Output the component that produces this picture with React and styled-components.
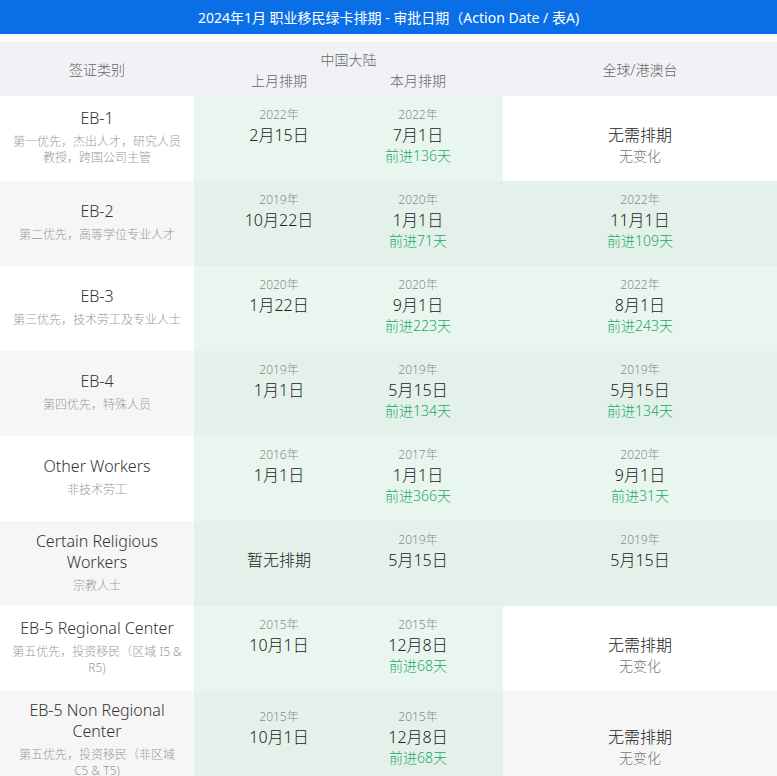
import React from "react";
import styled, { createGlobalStyle } from "styled-components";

const GlobalStyle = createGlobalStyle`
  html, body { margin: 0; padding: 0; overflow: hidden; background: #ffffff; }
  body { font-family: "Noto Sans", "Noto Sans CJK SC", sans-serif; font-weight: 300; }
  * { box-sizing: border-box; }
`;

const Page = styled.div`
  width: 777px;
  display: flex;
  flex-direction: column;
`;

const TitleBar = styled.div`
  height: 34px;
  background: #0a6fe6;
  color: #ffffff;
  font-size: 14px;
  font-weight: 400;
  display: flex;
  align-items: center;
  justify-content: center;
  padding-bottom: 1px;
`;

const Table = styled.div`
  margin-top: 8px;
  display: flex;
  flex-direction: column;
`;

const HeaderRow = styled.div`
  display: grid;
  grid-template-columns: 194px 309px 1fr;
  height: 54px;
  background: #f1f2f5;
  color: #666666;
  font-size: 14px;
`;

const HeaderCell = styled.div`
  display: flex;
  align-items: center;
  justify-content: center;
`;

const HeaderGroup = styled.div`
  display: flex;
  flex-direction: column;
  align-items: center;
  padding: 8px 15.5px 0;
  line-height: 20px;
`;

const HeaderSubs = styled.div`
  display: grid;
  grid-template-columns: 139px 139px;
  width: 100%;
  margin-top: 1px;
  text-align: center;
`;

const Row = styled.div`
  display: grid;
  grid-template-columns: 194px 309px 1fr;
  min-height: 85px;
`;

const LabelCell = styled.div`
  background: ${(p) => (p.$even ? "#f6f6f6" : "#ffffff")};
  display: flex;
  flex-direction: column;
  align-items: center;
  justify-content: center;
  text-align: center;
  padding: 9px 10.5px 12px;
`;

const LabelTitle = styled.div`
  font-size: 16px;
  line-height: 21px;
  color: #333333;
`;

const LabelSub = styled.div`
  font-size: 12px;
  line-height: 16px;
  color: #999999;
  margin-top: 5px;
`;

const ChinaCell = styled.div`
  background: ${(p) => (p.$even ? "#e4f1ea" : "#e9f6ef")};
  display: grid;
  grid-template-columns: 139px 139px;
  padding: 0 15.5px;
`;

const GlobalCell = styled.div`
  background: ${(p) =>
    p.$filled ? (p.$even ? "#e4f1ea" : "#e9f6ef") : p.$even ? "#f6f6f6" : "#ffffff"};
  display: flex;
  justify-content: center;
`;

const DateBlock = styled.div`
  display: flex;
  flex-direction: column;
  align-items: center;
  justify-content: center;
  padding-bottom: 7px;
  text-align: center;
`;

const Year = styled.div`
  font-size: 12px;
  line-height: 20px;
  height: 20px;
  color: #8a8a8a;
`;

const DateText = styled.div`
  font-size: 16px;
  line-height: 20px;
  height: 20px;
  color: #222222;
`;

const Note = styled.div`
  font-size: 14px;
  line-height: 21px;
  height: 21px;
  color: ${(p) => (p.$grey ? "#777777" : "#20a869")};
`;

const rows = [
  {
    title: "EB-1",
    sub: "第一优先，杰出人才，研究人员教授，跨国公司主管",
    prev: { y: "2022年", d: "2月15日" },
    cur: { y: "2022年", d: "7月1日", n: "前进136天" },
    global: { none: true },
  },
  {
    title: "EB-2",
    sub: "第二优先，高等学位专业人才",
    prev: { y: "2019年", d: "10月22日" },
    cur: { y: "2020年", d: "1月1日", n: "前进71天" },
    global: { y: "2022年", d: "11月1日", n: "前进109天" },
  },
  {
    title: "EB-3",
    sub: "第三优先，技术劳工及专业人士",
    prev: { y: "2020年", d: "1月22日" },
    cur: { y: "2020年", d: "9月1日", n: "前进223天" },
    global: { y: "2022年", d: "8月1日", n: "前进243天" },
  },
  {
    title: "EB-4",
    sub: "第四优先，特殊人员",
    prev: { y: "2019年", d: "1月1日" },
    cur: { y: "2019年", d: "5月15日", n: "前进134天" },
    global: { y: "2019年", d: "5月15日", n: "前进134天" },
  },
  {
    title: "Other Workers",
    sub: "非技术劳工",
    prev: { y: "2016年", d: "1月1日" },
    cur: { y: "2017年", d: "1月1日", n: "前进366天" },
    global: { y: "2020年", d: "9月1日", n: "前进31天" },
  },
  {
    title: "Certain Religious Workers",
    sub: "宗教人士",
    prev: { y: "", d: "暂无排期" },
    cur: { y: "2019年", d: "5月15日" },
    global: { y: "2019年", d: "5月15日" },
  },
  {
    title: "EB-5 Regional Center",
    sub: "第五优先，投资移民（区域 I5 & R5)",
    prev: { y: "2015年", d: "10月1日" },
    cur: { y: "2015年", d: "12月8日", n: "前进68天" },
    global: { none: true },
  },
  {
    title: "EB-5 Non Regional Center",
    sub: "第五优先，投资移民（非区域 C5 & T5)",
    prev: { y: "2015年", d: "10月1日" },
    cur: { y: "2015年", d: "12月8日", n: "前进68天" },
    global: { none: true },
  },
];

function DateInfo({ v }) {
  if (v.none) {
    return (
      <DateBlock>
        <Year />
        <DateText>无需排期</DateText>
        <Note $grey>无变化</Note>
      </DateBlock>
    );
  }
  return (
    <DateBlock>
      <Year>{v.y}</Year>
      <DateText>{v.d}</DateText>
      <Note>{v.n || ""}</Note>
    </DateBlock>
  );
}

export default function App() {
  return (
    <Page>
      <GlobalStyle />
      <TitleBar>2024年1月 职业移民绿卡排期 - 审批日期（Action Date / 表A)</TitleBar>
      <Table>
        <HeaderRow>
          <HeaderCell>签证类别</HeaderCell>
          <HeaderGroup>
            <div>中国大陆</div>
            <HeaderSubs>
              <div>上月排期</div>
              <div>本月排期</div>
            </HeaderSubs>
          </HeaderGroup>
          <HeaderCell>全球/港澳台</HeaderCell>
        </HeaderRow>
        {rows.map((r, i) => {
          const even = i % 2 === 1;
          return (
            <Row key={r.title}>
              <LabelCell $even={even}>
                <LabelTitle>{r.title}</LabelTitle>
                <LabelSub>{r.sub}</LabelSub>
              </LabelCell>
              <ChinaCell $even={even}>
                <DateInfo v={r.prev} />
                <DateInfo v={r.cur} />
              </ChinaCell>
              <GlobalCell $even={even} $filled={!r.global.none}>
                <DateInfo v={r.global} />
              </GlobalCell>
            </Row>
          );
        })}
      </Table>
    </Page>
  );
}
